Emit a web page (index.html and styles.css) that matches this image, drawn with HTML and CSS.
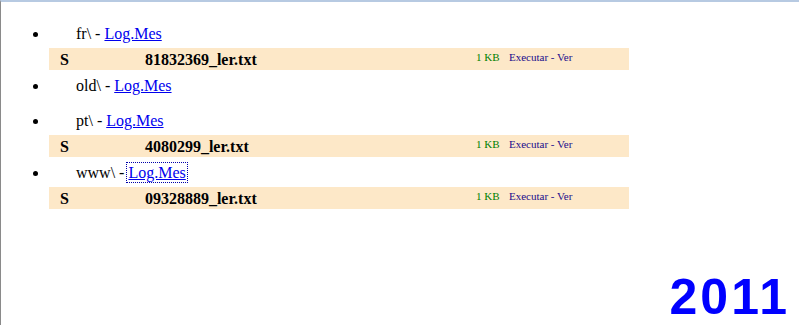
FILE: index.html
```html
<!DOCTYPE html>
<html lang="pt">
<head>
    <meta charset="UTF-8">
    <title>Logs</title>
    <link rel="stylesheet" href="styles.css">
</head>
<body>
    <ul class="folders">
        <li>
            <div class="label">fr\ - <a href="#">Log.Mes</a></div>
            <div class="file">
                <div class="name">S<span class="hide"></span>81832369_ler.txt</div>
                <div class="size">1 KB</div>
                <div class="actions"><a href="#">Executar</a> - <a href="#">Ver</a></div>
            </div>
        </li>
        <li class="empty">
            <div class="label">old\ - <a href="#">Log.Mes</a></div>
        </li>
        <li>
            <div class="label">pt\ - <a href="#">Log.Mes</a></div>
            <div class="file">
                <div class="name">S<span class="hide"></span>4080299_ler.txt</div>
                <div class="size">1 KB</div>
                <div class="actions"><a href="#">Executar</a> - <a href="#">Ver</a></div>
            </div>
        </li>
        <li>
            <div class="label">www\ - <a href="#" class="focused">Log.Mes</a></div>
            <div class="file">
                <div class="name">S<span class="hide"></span>09328889_ler.txt</div>
                <div class="size">1 KB</div>
                <div class="actions"><a href="#">Executar</a> - <a href="#">Ver</a></div>
            </div>
        </li>
    </ul>
    <div class="year">2011</div>
</body>
</html>
```

FILE: styles.css
```css
html {
    height: 100%;
}
body {
    font-family: 'Liberation Serif', 'Times New Roman', serif;
    font-size: 16px;
    margin: 0;
    padding: 0 8px;
    height: 100%;
    box-sizing: border-box;
    border-top: 2px solid #b7cae2;
    border-left: 1px solid #8a8a8a;
    display: flex;
    flex-direction: column;
    color: #000;
}
.folders {
    margin: 22px 0 0 0;
    padding-left: 40px;
    width: 580px;
}
.folders li {
    margin-bottom: 6px;
}
.folders li.empty {
    margin-bottom: 15px;
}
.label {
    padding-left: 27px;
    line-height: 20px;
    height: 20px;
}
.label a {
    color: #0000ee;
}
.focused {
    outline: 1px dotted #0000aa;
    outline-offset: 1px;
}
.file {
    display: flex;
    background: #fde8c8;
    height: 22px;
    margin-top: 4px;
}
.name {
    flex: 1;
    font-weight: bold;
    padding-left: 11px;
    line-height: 24px;
}
.hide {
    display: inline-block;
    width: 76px;
    height: 1px;
}
.size {
    width: 33px;
    font-size: 11px;
    color: #008000;
    padding-top: 3px;
}
.actions {
    width: 120px;
    font-size: 11px;
    color: #1a0d8c;
    padding-top: 3px;
}
.actions a {
    color: #1a0d8c;
    text-decoration: none;
}
.year {
    margin-top: auto;
    text-align: right;
    font-family: 'Liberation Sans', Arial, sans-serif;
    font-weight: bold;
    font-size: 50px;
    letter-spacing: 3px;
    color: #0000ff;
    line-height: 56px;
    padding-right: 1px;
}
```
